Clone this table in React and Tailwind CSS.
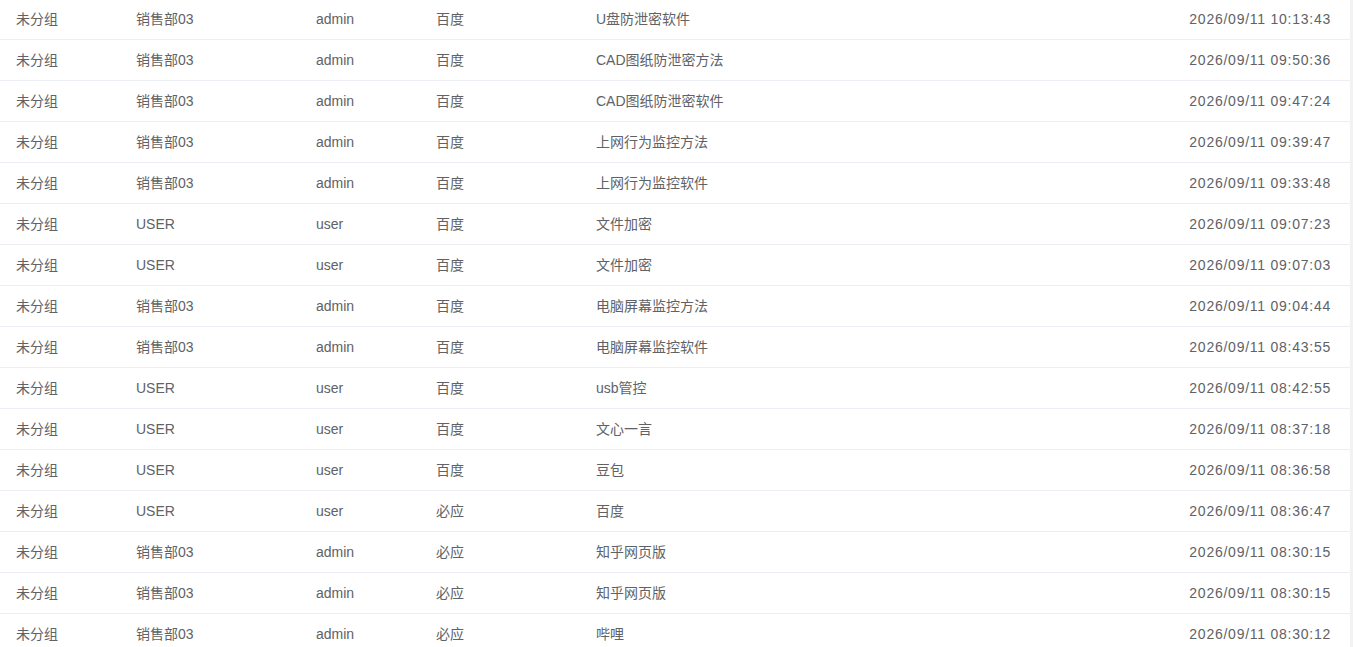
const rows = [
  ["未分组", "销售部03", "admin", "百度", "U盘防泄密软件", "2026/09/11 10:13:43"],
  ["未分组", "销售部03", "admin", "百度", "CAD图纸防泄密方法", "2026/09/11 09:50:36"],
  ["未分组", "销售部03", "admin", "百度", "CAD图纸防泄密软件", "2026/09/11 09:47:24"],
  ["未分组", "销售部03", "admin", "百度", "上网行为监控方法", "2026/09/11 09:39:47"],
  ["未分组", "销售部03", "admin", "百度", "上网行为监控软件", "2026/09/11 09:33:48"],
  ["未分组", "USER", "user", "百度", "文件加密", "2026/09/11 09:07:23"],
  ["未分组", "USER", "user", "百度", "文件加密", "2026/09/11 09:07:03"],
  ["未分组", "销售部03", "admin", "百度", "电脑屏幕监控方法", "2026/09/11 09:04:44"],
  ["未分组", "销售部03", "admin", "百度", "电脑屏幕监控软件", "2026/09/11 08:43:55"],
  ["未分组", "USER", "user", "百度", "usb管控", "2026/09/11 08:42:55"],
  ["未分组", "USER", "user", "百度", "文心一言", "2026/09/11 08:37:18"],
  ["未分组", "USER", "user", "百度", "豆包", "2026/09/11 08:36:58"],
  ["未分组", "USER", "user", "必应", "百度", "2026/09/11 08:36:47"],
  ["未分组", "销售部03", "admin", "必应", "知乎网页版", "2026/09/11 08:30:15"],
  ["未分组", "销售部03", "admin", "必应", "知乎网页版", "2026/09/11 08:30:15"],
  ["未分组", "销售部03", "admin", "必应", "哔哩", "2026/09/11 08:30:12"],
];

export default function App() {
  return (
    <div
      className="flex h-[647px] w-[1353px] overflow-hidden bg-white text-[14px] text-[#606266]"
      style={{ fontFamily: '"Liberation Sans", "Noto Sans CJK SC", sans-serif' }}
    >
      <div className="-mt-px flex w-[1350px] flex-col">
        {rows.map((r, i) => (
          <div key={i} className="flex h-[41px] shrink-0 items-center border-b border-[#ebeef5]">
            <div className="w-[120px] pl-4">{r[0]}</div>
            <div className="w-[180px] pl-4">{r[1]}</div>
            <div className="w-[120px] pl-4">{r[2]}</div>
            <div className="w-[160px] pl-4">{r[3]}</div>
            <div className="flex-1 pl-4">{r[4]}</div>
            <div className="pr-[19px] text-right tracking-[0.75px]">{r[5]}</div>
          </div>
        ))}
      </div>
      <div className="w-[3px] bg-[#f2f2f2]" />
    </div>
  );
}
